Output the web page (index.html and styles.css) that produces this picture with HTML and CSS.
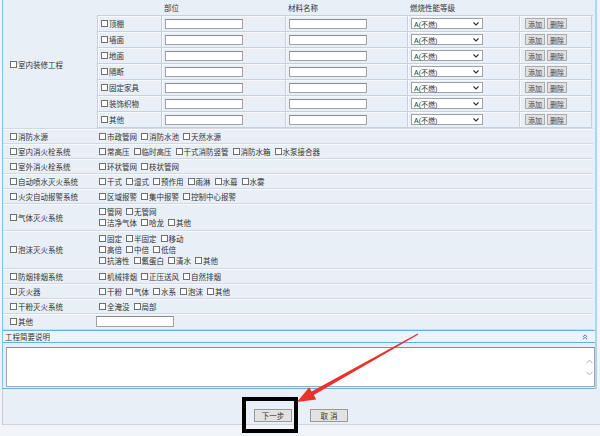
FILE: index.html
```html
<!DOCTYPE html>
<html lang="zh-CN">
<head>
<meta charset="UTF-8">
<meta name="viewport" content="width=device-width, initial-scale=1.0">
<title>消防设计审核 - 工程信息</title>
<link rel="stylesheet" href="styles.css">
</head>
<body>
<div class="page">
    <div class="panel">
        <!-- 室内装修工程 -->
        <div class="form-row row-deco">
            <div class="form-label"><input type="checkbox" class="chk">室内装修工程</div>
            <div class="form-field field-deco">
                <div class="deco-head">
                    <span></span><span>部位</span><span>材料名称</span><span>燃烧性能等级</span><span></span>
                </div>
                <div class="deco-body">
                    <div class="cell"><input type="checkbox" class="chk">顶棚</div>
                    <div class="cell"><input type="text" class="txt"></div>
                    <div class="cell"><input type="text" class="txt"></div>
                    <div class="cell"><div class="sel">A(不燃)<svg width="6" height="4" viewBox="0 0 6 4"><path d="M0.5 0.5 L3 3 L5.5 0.5" fill="none" stroke="#333" stroke-width="1.1"/></svg></div></div>
                    <div class="cell ops"><button class="mini-btn">添加</button><button class="mini-btn">删除</button></div>

                    <div class="cell"><input type="checkbox" class="chk">墙面</div>
                    <div class="cell"><input type="text" class="txt"></div>
                    <div class="cell"><input type="text" class="txt"></div>
                    <div class="cell"><div class="sel">A(不燃)<svg width="6" height="4" viewBox="0 0 6 4"><path d="M0.5 0.5 L3 3 L5.5 0.5" fill="none" stroke="#333" stroke-width="1.1"/></svg></div></div>
                    <div class="cell ops"><button class="mini-btn">添加</button><button class="mini-btn">删除</button></div>

                    <div class="cell"><input type="checkbox" class="chk">地面</div>
                    <div class="cell"><input type="text" class="txt"></div>
                    <div class="cell"><input type="text" class="txt"></div>
                    <div class="cell"><div class="sel">A(不燃)<svg width="6" height="4" viewBox="0 0 6 4"><path d="M0.5 0.5 L3 3 L5.5 0.5" fill="none" stroke="#333" stroke-width="1.1"/></svg></div></div>
                    <div class="cell ops"><button class="mini-btn">添加</button><button class="mini-btn">删除</button></div>

                    <div class="cell"><input type="checkbox" class="chk">隔断</div>
                    <div class="cell"><input type="text" class="txt"></div>
                    <div class="cell"><input type="text" class="txt"></div>
                    <div class="cell"><div class="sel">A(不燃)<svg width="6" height="4" viewBox="0 0 6 4"><path d="M0.5 0.5 L3 3 L5.5 0.5" fill="none" stroke="#333" stroke-width="1.1"/></svg></div></div>
                    <div class="cell ops"><button class="mini-btn">添加</button><button class="mini-btn">删除</button></div>

                    <div class="cell"><input type="checkbox" class="chk">固定家具</div>
                    <div class="cell"><input type="text" class="txt"></div>
                    <div class="cell"><input type="text" class="txt"></div>
                    <div class="cell"><div class="sel">A(不燃)<svg width="6" height="4" viewBox="0 0 6 4"><path d="M0.5 0.5 L3 3 L5.5 0.5" fill="none" stroke="#333" stroke-width="1.1"/></svg></div></div>
                    <div class="cell ops"><button class="mini-btn">添加</button><button class="mini-btn">删除</button></div>

                    <div class="cell"><input type="checkbox" class="chk">装饰织物</div>
                    <div class="cell"><input type="text" class="txt"></div>
                    <div class="cell"><input type="text" class="txt"></div>
                    <div class="cell"><div class="sel">A(不燃)<svg width="6" height="4" viewBox="0 0 6 4"><path d="M0.5 0.5 L3 3 L5.5 0.5" fill="none" stroke="#333" stroke-width="1.1"/></svg></div></div>
                    <div class="cell ops"><button class="mini-btn">添加</button><button class="mini-btn">删除</button></div>

                    <div class="cell"><input type="checkbox" class="chk">其他</div>
                    <div class="cell"><input type="text" class="txt"></div>
                    <div class="cell"><input type="text" class="txt"></div>
                    <div class="cell"><div class="sel">A(不燃)<svg width="6" height="4" viewBox="0 0 6 4"><path d="M0.5 0.5 L3 3 L5.5 0.5" fill="none" stroke="#333" stroke-width="1.1"/></svg></div></div>
                    <div class="cell ops"><button class="mini-btn">添加</button><button class="mini-btn">删除</button></div>
                </div>
            </div>
        </div>

        <div class="form-row">
            <div class="form-label"><input type="checkbox" class="chk">消防水源</div>
            <div class="form-field">
                <div class="opt-line">
                    <label class="opt"><input type="checkbox" class="chk">市政管网</label>
                    <label class="opt"><input type="checkbox" class="chk">消防水池</label>
                    <label class="opt"><input type="checkbox" class="chk">天然水源</label>
                </div>
            </div>
        </div>

        <div class="form-row">
            <div class="form-label"><input type="checkbox" class="chk">室内消火栓系统</div>
            <div class="form-field">
                <div class="opt-line">
                    <label class="opt"><input type="checkbox" class="chk">常高压</label>
                    <label class="opt"><input type="checkbox" class="chk">临时高压</label>
                    <label class="opt"><input type="checkbox" class="chk">干式消防竖管</label>
                    <label class="opt"><input type="checkbox" class="chk">消防水箱</label>
                    <label class="opt"><input type="checkbox" class="chk">水泵接合器</label>
                </div>
            </div>
        </div>

        <div class="form-row">
            <div class="form-label"><input type="checkbox" class="chk">室外消火栓系统</div>
            <div class="form-field">
                <div class="opt-line">
                    <label class="opt"><input type="checkbox" class="chk">环状管网</label>
                    <label class="opt"><input type="checkbox" class="chk">枝状管网</label>
                </div>
            </div>
        </div>

        <div class="form-row">
            <div class="form-label"><input type="checkbox" class="chk">自动喷水灭火系统</div>
            <div class="form-field">
                <div class="opt-line">
                    <label class="opt"><input type="checkbox" class="chk">干式</label>
                    <label class="opt"><input type="checkbox" class="chk">湿式</label>
                    <label class="opt"><input type="checkbox" class="chk">预作用</label>
                    <label class="opt"><input type="checkbox" class="chk">雨淋</label>
                    <label class="opt"><input type="checkbox" class="chk">水幕</label>
                    <label class="opt"><input type="checkbox" class="chk">水雾</label>
                </div>
            </div>
        </div>

        <div class="form-row">
            <div class="form-label"><input type="checkbox" class="chk">火灾自动报警系统</div>
            <div class="form-field">
                <div class="opt-line">
                    <label class="opt"><input type="checkbox" class="chk">区域报警</label>
                    <label class="opt"><input type="checkbox" class="chk">集中报警</label>
                    <label class="opt"><input type="checkbox" class="chk">控制中心报警</label>
                </div>
            </div>
        </div>

        <div class="form-row row-2">
            <div class="form-label"><input type="checkbox" class="chk">气体灭火系统</div>
            <div class="form-field">
                <div class="opt-line">
                    <label class="opt"><input type="checkbox" class="chk">管网</label>
                    <label class="opt"><input type="checkbox" class="chk">无管网</label>
                </div>
                <div class="opt-line">
                    <label class="opt"><input type="checkbox" class="chk">洁净气体</label>
                    <label class="opt"><input type="checkbox" class="chk">哈龙</label>
                    <label class="opt"><input type="checkbox" class="chk">其他</label>
                </div>
            </div>
        </div>

        <div class="form-row row-3">
            <div class="form-label"><input type="checkbox" class="chk">泡沫灭火系统</div>
            <div class="form-field">
                <div class="opt-line">
                    <label class="opt"><input type="checkbox" class="chk">固定</label>
                    <label class="opt"><input type="checkbox" class="chk">半固定</label>
                    <label class="opt"><input type="checkbox" class="chk">移动</label>
                </div>
                <div class="opt-line">
                    <label class="opt"><input type="checkbox" class="chk">高倍</label>
                    <label class="opt"><input type="checkbox" class="chk">中倍</label>
                    <label class="opt"><input type="checkbox" class="chk">低倍</label>
                </div>
                <div class="opt-line">
                    <label class="opt"><input type="checkbox" class="chk">抗溶性</label>
                    <label class="opt"><input type="checkbox" class="chk">氟蛋白</label>
                    <label class="opt"><input type="checkbox" class="chk">清水</label>
                    <label class="opt"><input type="checkbox" class="chk">其他</label>
                </div>
            </div>
        </div>

        <div class="form-row">
            <div class="form-label"><input type="checkbox" class="chk">防烟排烟系统</div>
            <div class="form-field">
                <div class="opt-line">
                    <label class="opt"><input type="checkbox" class="chk">机械排烟</label>
                    <label class="opt"><input type="checkbox" class="chk">正压送风</label>
                    <label class="opt"><input type="checkbox" class="chk">自然排烟</label>
                </div>
            </div>
        </div>

        <div class="form-row">
            <div class="form-label"><input type="checkbox" class="chk">灭火器</div>
            <div class="form-field">
                <div class="opt-line">
                    <label class="opt"><input type="checkbox" class="chk">干粉</label>
                    <label class="opt"><input type="checkbox" class="chk">气体</label>
                    <label class="opt"><input type="checkbox" class="chk">水系</label>
                    <label class="opt"><input type="checkbox" class="chk">泡沫</label>
                    <label class="opt"><input type="checkbox" class="chk">其他</label>
                </div>
            </div>
        </div>

        <div class="form-row">
            <div class="form-label"><input type="checkbox" class="chk">干粉灭火系统</div>
            <div class="form-field">
                <div class="opt-line">
                    <label class="opt"><input type="checkbox" class="chk">全淹没</label>
                    <label class="opt"><input type="checkbox" class="chk">局部</label>
                </div>
            </div>
        </div>

        <div class="form-row row-other">
            <div class="form-label"><input type="checkbox" class="chk">其他</div>
            <div class="form-field">
                <input type="text" class="txt txt-other">
            </div>
        </div>

        <!-- 工程简要说明 -->
        <div class="note">
            <div class="note-head">
                <span>工程简要说明</span>
                <svg width="6" height="6" viewBox="0 0 6 6"><path d="M0.8 3 L3 0.9 L5.2 3 M0.8 5.4 L3 3.3 L5.2 5.4" fill="none" stroke="#4a6e96" stroke-width="0.9"/></svg>
            </div>
            <div class="note-body">
                <div class="note-box">
                    <textarea class="note-text"></textarea>
                    <div class="note-scroll">
                        <svg width="7" height="5" viewBox="0 0 7 5"><path d="M0.6 4.2 L3.5 1 L6.4 4.2" fill="none" stroke="#b4b4b4" stroke-width="1"/></svg>
                        <svg width="7" height="5" viewBox="0 0 7 5"><path d="M0.6 0.8 L3.5 4 L6.4 0.8" fill="none" stroke="#b4b4b4" stroke-width="1"/></svg>
                    </div>
                </div>
            </div>
        </div>
    </div>

    <div class="actions">
        <span class="mark"><button class="btn">下一步</button></span>
        <button class="btn">取 消</button>
    </div>

    <!-- 标注箭头 -->
    <svg class="arrow" width="600" height="436" viewBox="0 0 600 436">
        <polygon points="418.3,334.4 417.7,333.6 311.6,391.6 309.2,387.2 297,402 316.2,399.4 313.8,395" fill="#e8322b"/>
    </svg>
</div>
</body>
</html>
```

FILE: styles.css
```css
body {
    margin: 0;
    background-color: #f1f4f9;
    font-family: "Liberation Sans", "Noto Sans CJK SC", sans-serif;
    font-size: 7.5px;
    color: #333;
}
.page {
    position: relative;
    width: 600px;
    height: 436px;
    overflow: hidden;
}
.panel {
    margin-left: 2px;
    width: 592px;
    background-color: #e9eff7;
    border-left: 1px solid #86bfe8;
    border-right: 2px solid #a9d6f3;
}

/* linhas do formulário */
.form-row {
    display: flex;
    min-height: 14px;
    margin-right: 2px;
    border-bottom: 1px solid #d2d9e2;
    box-shadow: 0 1px 0 #f7f9fc;
}
.row-deco { min-height: 128px; }
.row-2 { min-height: 26px; }
.row-3 { min-height: 37px; }
.row-other { min-height: 15px; }
.form-label {
    width: 86px;
    padding-left: 7px;
    display: flex;
    align-items: center;
    white-space: nowrap;
}
.form-field {
    flex: 1;
    display: flex;
    flex-direction: column;
    justify-content: center;
    padding: 1px 0 1px 3px;
}
.row-other .form-field {
    padding-left: 0;
}
.opt-line {
    display: flex;
    align-items: center;
    gap: 4px;
    height: 11px;
    white-space: nowrap;
}
.opt {
    display: flex;
    align-items: center;
}
.chk {
    appearance: none;
    -webkit-appearance: none;
    width: 7px;
    height: 7px;
    margin: 0 1px 0 0;
    border: 1px solid #6f6f6f;
    background-color: #fff;
    box-sizing: border-box;
    flex: none;
}
.txt {
    box-sizing: border-box;
    width: 78px;
    height: 10px;
    margin: 0;
    padding: 0;
    border: 1px solid #a3a3a3;
    border-top-color: #8a8a8a;
    background-color: #fff;
}
.txt-other { width: 78px; height: 11px; }

/* sub tabela do室内装修 */
.field-deco {
    justify-content: flex-start;
    padding: 0 0 0 1px;
}
.deco-head,
.deco-body {
    display: grid;
    grid-template-columns: 64px 124px 122px 112px 72px;
}
.deco-head {
    height: 15px;
}
.deco-head span {
    padding: 0 0 2px 3px;
    display: flex;
    align-items: flex-end;
}
.deco-body {
    grid-auto-rows: 16px;
    border-top: 1px solid #c8d0da;
    border-left: 1px solid #c8d0da;
}
.cell {
    display: flex;
    align-items: center;
    padding-left: 3px;
    border-right: 1px solid #c8d0da;
    border-bottom: 1px solid #c8d0da;
    box-shadow: inset 1px 1px 0 #f8fafd;
    white-space: nowrap;
}
.sel {
    box-sizing: border-box;
    width: 72px;
    height: 11px;
    padding: 0 3px 0 2px;
    display: flex;
    align-items: center;
    justify-content: space-between;
    border: 1px solid #a3a3a3;
    background-color: #fff;
    font-size: 7px;
}
.ops {
    padding-left: 5px;
    gap: 2px;
}
.mini-btn {
    box-sizing: border-box;
    width: 20px;
    height: 11px;
    margin: 0;
    padding: 0;
    font-family: inherit;
    font-size: 7px;
    color: #444;
    background-color: #e1e1e1;
    border: 1px solid #acacac;
}

/* 工程简要说明 */
.note {
    border-top: 1px solid #61b2e8;
    border-bottom: 1px solid #61b2e8;
}
.note-head {
    height: 11px;
    padding: 0 7px 0 2px;
    display: flex;
    align-items: center;
    justify-content: space-between;
    border-bottom: 1px solid #61b2e8;
    background-color: #edf3fa;
}
.note-body {
    padding: 4px 0 1px 3px;
}
.note-box {
    display: flex;
    height: 38px;
    border: 1px solid #a6a6a6;
    border-top-color: #8d8d8d;
    background-color: #fff;
}
.note-text {
    flex: 1;
    margin: 0;
    border: none;
    resize: none;
    outline: none;
    background: transparent;
}
.note-scroll {
    width: 10px;
    display: flex;
    flex-direction: column;
    justify-content: center;
    align-items: center;
    gap: 7px;
}

/* botões */
.actions {
    margin-left: 2px;
    height: 35px;
    display: flex;
    align-items: flex-start;
    justify-content: center;
    gap: 12px;
    padding-right: 13px;
    border-left: 1px solid #c3cad3;
    border-bottom: 1px solid #cfd5dd;
    background-color: #e9eff7;
}
.mark {
    box-sizing: border-box;
    margin-top: 8px;
    height: 36px;
    padding: 8px 2px 0 8px;
    border: 4px solid #000;
    flex: none;
}
.btn {
    box-sizing: border-box;
    width: 38px;
    height: 13px;
    margin: 0;
    padding: 0;
    font-family: inherit;
    font-size: 7.5px;
    color: #333;
    background-color: #e2e2e2;
    border: 1px solid #9a9a9a;
}
.actions > .btn {
    margin-top: 20px;
}
.arrow {
    position: absolute;
    left: 0;
    top: 0;
    pointer-events: none;
}
```
